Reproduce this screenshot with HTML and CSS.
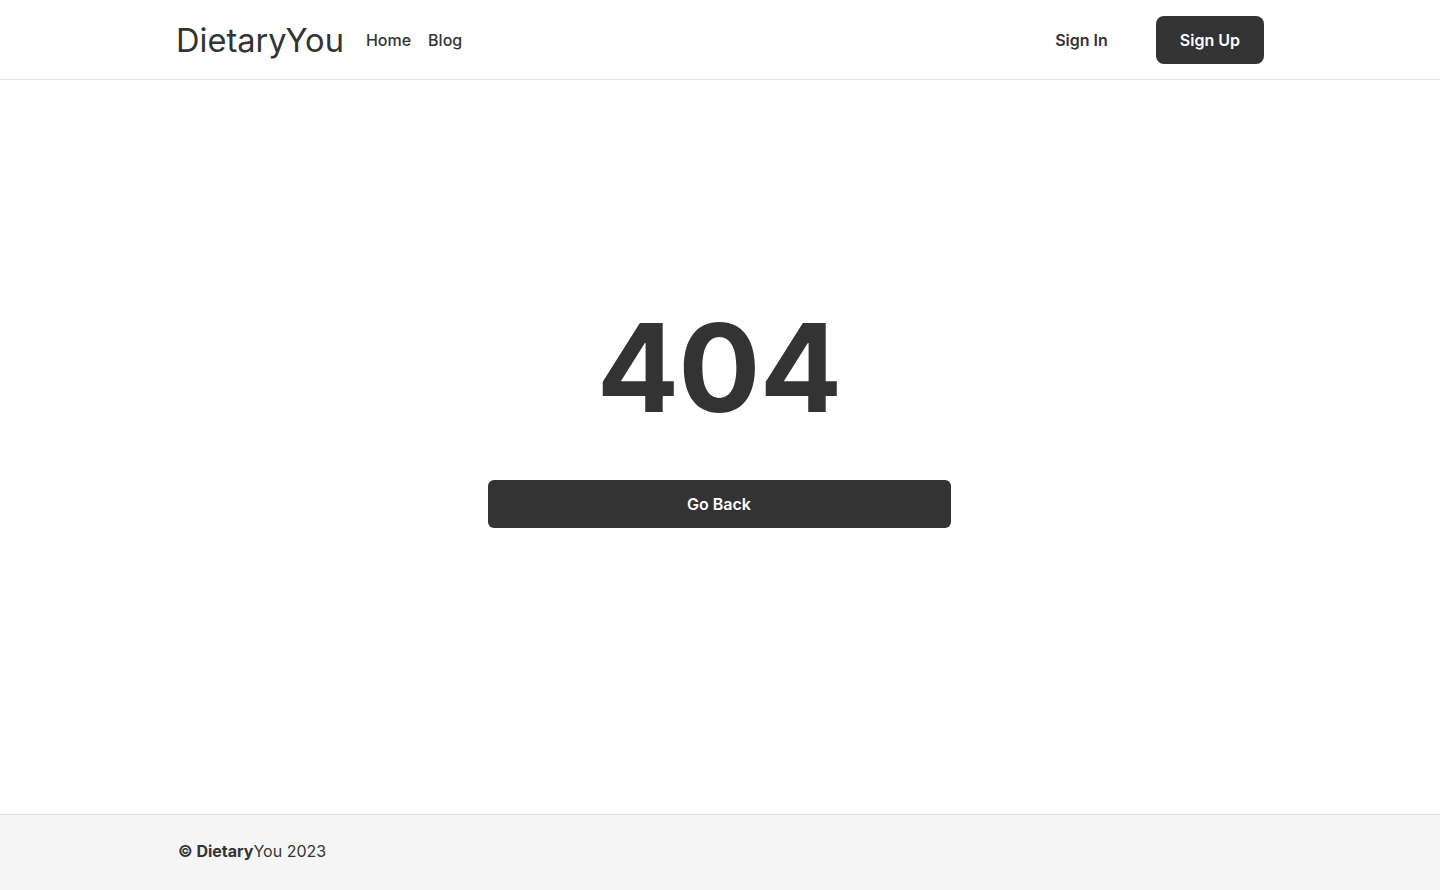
FILE: index.html
```html
<!DOCTYPE html>
<html lang="en">
<head>
<meta charset="utf-8">
<title>DietaryYou - 404</title>
<link rel="stylesheet" href="styles.css">
</head>
<body>
<div class="page">
  <header class="header">
    <div class="container header-inner">
      <div class="left">
        <a class="logo" href="#">DietaryYou</a>
        <nav class="nav">
          <a href="#" class="nav-link">Home</a>
          <a href="#" class="nav-link">Blog</a>
        </nav>
      </div>
      <div class="right">
        <a href="#" class="btn btn-ghost">Sign In</a>
        <a href="#" class="btn btn-dark">Sign Up</a>
      </div>
    </div>
  </header>
  <main class="main">
    <h1 class="code">404</h1>
    <a href="#" class="btn btn-dark btn-back">Go Back</a>
  </main>
  <footer class="footer">
    <div class="container footer-inner">
      <span><b>© Dietary</b>You 2023</span>
    </div>
  </footer>
</div>
</body>
</html>
```
FILE: styles.css
```css
* { box-sizing: border-box; }
html, body { margin: 0; padding: 0; }
body {
  font-family: Inter, "Liberation Sans", sans-serif;
  color: #333333;
  background: #ffffff;
}
a { text-decoration: none; color: inherit; }
.page {
  min-height: 890px;
  display: flex;
  flex-direction: column;
}
.container {
  width: 1088px;
  margin: 0 auto;
}
.header {
  height: 80px;
  border-bottom: 1px solid #e5e5e5;
}
.header-inner {
  height: 79px;
  display: flex;
  align-items: center;
  justify-content: space-between;
}
.left {
  display: flex;
  align-items: center;
  gap: 22px;
}
.logo {
  font-size: 32.6px;
  font-weight: 400;
  color: #333333;
}
.nav {
  display: flex;
  gap: 17px;
  padding-top: 1px;
}
.nav-link {
  font-size: 16px;
  font-weight: 500;
  color: #333333;
}
.right {
  display: flex;
  align-items: center;
  gap: 24px;
}
.btn {
  display: inline-flex;
  align-items: center;
  justify-content: center;
  height: 48px;
  padding: 0 24px;
  border-radius: 8px;
  font-size: 16px;
  font-weight: 600;
}
.btn-ghost { color: #333333; }
.btn-dark {
  background: #333333;
  color: #ffffff;
}
.main {
  flex: 1;
  display: flex;
  flex-direction: column;
  align-items: center;
  padding-top: 215px;
}
.code {
  margin: 0;
  font-size: 122px;
  line-height: 1.2;
  font-weight: 700;
  letter-spacing: -1px;
  color: #333333;
  transform: translateX(-1px);
}
.btn-back {
  margin-top: 39px;
  width: 463px;
  border-radius: 6px;
  transform: translateX(-1px);
}
.footer {
  height: 76px;
  background: #f5f5f5;
  border-top: 1px solid #e0e0e0;
}
.footer-inner {
  height: 75px;
  display: flex;
  align-items: center;
  padding-left: 2px;
  padding-bottom: 3px;
  font-size: 16px;
  color: #333333;
}
.footer-inner b { font-weight: 700; }
```
